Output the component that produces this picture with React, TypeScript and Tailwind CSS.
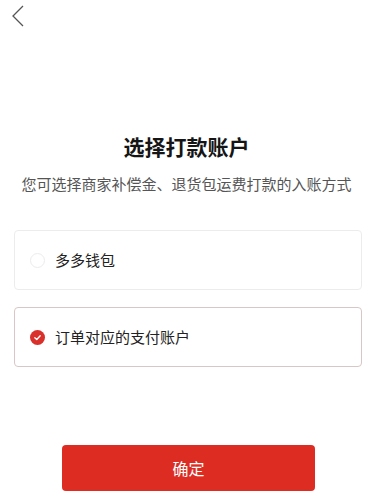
import { useState } from "react";

const options = [
  { id: "wallet", label: "多多钱包" },
  { id: "order", label: "订单对应的支付账户" },
];

export default function App() {
  const [selected, setSelected] = useState("order");

  return (
    <div
      className="relative h-[503px] w-[373px] overflow-hidden bg-white text-[#222]"
      style={{ fontFamily: '"Noto Sans CJK SC", "Noto Sans", sans-serif' }}
    >
      {/* Back */}
      <div className="h-[30px] pl-[10px] pt-[4px]">
        <svg width="16" height="24" viewBox="0 0 16 24" fill="none">
          <path d="M13 2 L3 12 L13 22" stroke="#555" strokeWidth="1.3" />
        </svg>
      </div>

      <h1 className="mt-[101px] text-center text-[21px] font-bold leading-[30px] text-[#151515]">
        选择打款账户
      </h1>
      <p className="mt-[12px] text-center text-[15px] leading-[22px] text-[#555]">
        您可选择商家补偿金、退货包运费打款的入账方式
      </p>

      <div className="ml-[14px] mt-[35px] flex w-[348px] flex-col gap-[17px]">
        {options.map((opt) => {
          const active = selected === opt.id;
          return (
            <button
              key={opt.id}
              onClick={() => setSelected(opt.id)}
              className={
                active
                  ? "flex h-[60px] items-center gap-[10px] rounded-[4px] border border-[#d9c6c6] bg-white pl-[15px] text-left"
                  : "flex h-[60px] items-center gap-[10px] rounded-[4px] border border-[#ececec] bg-white pl-[15px] text-left"
              }
            >
              {active ? (
                <span className="flex h-[15px] w-[15px] items-center justify-center rounded-full bg-[#d9302b]">
                  <svg width="9" height="9" viewBox="0 0 10 10" fill="none">
                    <path d="M2 5.2 L4.2 7.2 L8 3" stroke="#fff" strokeWidth="1.5" strokeLinecap="round" strokeLinejoin="round" />
                  </svg>
                </span>
              ) : (
                <span className="h-[15px] w-[15px] rounded-full border border-[#ececec]" />
              )}
              <span className="text-[15px] leading-[20px] text-[#222]">{opt.label}</span>
            </button>
          );
        })}
      </div>

      <div className="mt-[78px] flex justify-center">
        <button className="ml-[4px] h-[46px] w-[253px] rounded-[4px] bg-[#dd2c22] text-[16px] text-white">
          确定
        </button>
      </div>
    </div>
  );
}
